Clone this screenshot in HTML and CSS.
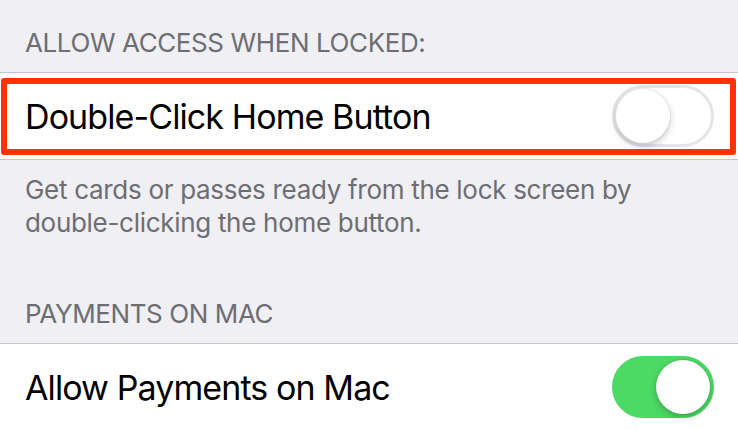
FILE: index.html
```html
<html>

<head>
  <title>Wallet &amp; Apple Pay</title>
  <link rel="stylesheet" href="styles.css">
</head>

<body>
  <div class="header">ALLOW ACCESS WHEN LOCKED:</div>
  <div class="group">
    <div class="cell">
      <span class="label">Double-Click Home Button</span>
      <div class="switch"><div class="knob"></div></div>
      <div class="highlight"></div>
    </div>
  </div>
  <div class="footer">Get cards or passes ready from the lock screen by double-clicking the home button.</div>

  <div class="header">PAYMENTS ON MAC</div>
  <div class="group">
    <div class="cell">
      <span class="label">Allow Payments on Mac</span>
      <div class="switch on"><div class="knob"></div></div>
    </div>
  </div>
</body>

</html>
```

FILE: styles.css
```css
body {
  margin: 0;
  background: #efeff4;
  font-family: Inter, "Noto Sans", sans-serif;
  overflow: hidden;
}

.header {
  color: #6d6d72;
  font-size: 26px;
  line-height: 32px;
  letter-spacing: -0.4px;
  padding: 27px 25px 13px;
}

.group {
  background: #fff;
  border-top: 1px solid #c8c7cc;
  border-bottom: 1px solid #c8c7cc;
}

.cell {
  position: relative;
  height: 86px;
  display: flex;
  align-items: center;
  justify-content: space-between;
  padding: 0 24px 0 25px;
}

.label {
  font-size: 34px;
  line-height: 41px;
  letter-spacing: -0.9px;
  color: #000;
}

.switch {
  width: 102px;
  height: 62px;
  box-sizing: border-box;
  border: 3px solid #e5e5e5;
  border-radius: 31px;
  background: #fff;
  padding: 0 1px;
  display: flex;
  align-items: center;
}

.switch.on {
  background: #4cd964;
  border-color: #4cd964;
  justify-content: flex-end;
}

.knob {
  width: 54px;
  height: 54px;
  border-radius: 50%;
  background: #fff;
  box-shadow: 0 3px 7px rgba(0, 0, 0, 0.22), 0 0 0 1px rgba(0, 0, 0, 0.05);
}

.highlight {
  position: absolute;
  top: 5px;
  left: 1px;
  right: 2px;
  bottom: 4px;
  border: 6px solid #ff3300;
  border-radius: 3px;
}

.footer {
  color: #6d6d72;
  font-size: 26px;
  line-height: 33px;
  letter-spacing: -0.3px;
  padding: 13px 25px 32px;
}
```
